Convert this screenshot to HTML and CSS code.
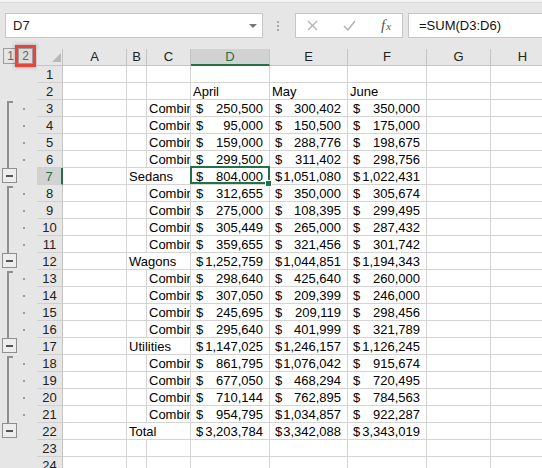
FILE: index.html
```html
<!DOCTYPE html>
<html lang="en">
<head>
    <meta charset="UTF-8">
    <meta name="viewport" content="width=device-width, initial-scale=1.0">
    <title>Sales by Category</title>
    <link rel="stylesheet" href="styles.css">
</head>
<body>
    <div class="formula-bar">
        <div class="name-box">
            <span>D7</span>
            <span class="name-arrow"></span>
        </div>
        <div class="grip"><i></i><i></i><i></i></div>
        <div class="fn-buttons">
            <svg class="fn-cancel" width="11" height="11" viewBox="0 0 11 11">
                <path d="M1 1 L10 10 M10 1 L1 10" stroke="#b3b3b3" stroke-width="1.4" fill="none"/>
            </svg>
            <svg class="fn-enter" width="13" height="11" viewBox="0 0 13 11">
                <path d="M1 6 L5 10 L12 1" stroke="#b3b3b3" stroke-width="1.5" fill="none"/>
            </svg>
            <span class="fx">f<span>x</span></span>
        </div>
        <div class="formula-input">=SUM(D3:D6)</div>
    </div>

    <div class="workspace">
        <div class="outline" id="outline">
            <div class="levels">
                <span class="level">1</span>
                <span class="level current">2</span>
            </div>
        </div>
        <div class="sheet" id="sheet"></div>
    </div>

    <script>
        const columns = ["A", "B", "C", "D", "E", "F", "G", "H"];

        // each group: four detail rows then the subtotal row
        const groups = [
            { label: "Sedans", items: [[250500, 300402, 350000], [95000, 150500, 175000], [159000, 288776, 198675], [299500, 311402, 298756]], total: [804000, 1051080, 1022431] },
            { label: "Wagons", items: [[312655, 350000, 305674], [275000, 108395, 299495], [305449, 265000, 287432], [359655, 321456, 301742]], total: [1252759, 1044851, 1194343] },
            { label: "Utilities", items: [[298640, 425640, 260000], [307050, 209399, 246000], [245695, 209119, 298456], [295640, 401999, 321789]], total: [1147025, 1246157, 1126245] },
            { label: "Total", items: [[861795, 1076042, 915674], [677050, 468294, 720495], [710144, 762895, 784563], [954795, 1034857, 922287]], total: [3203784, 3342088, 3343019] }
        ];

        const sheet = document.getElementById("sheet");
        const outline = document.getElementById("outline");

        function el(parent, cls, text) {
            const node = document.createElement("div");
            node.className = cls;
            if (text !== undefined) node.textContent = text;
            parent.appendChild(node);
            return node;
        }

        // build row list
        const rows = { 1: {}, 2: { D: "April", E: "May", F: "June" }, 23: {}, 24: {} };
        const outlineRows = { 1: "", 2: "" , 23: "", 24: "" };
        let r = 3;
        groups.forEach(g => {
            g.items.forEach((values, i) => {
                rows[r] = { C: "Combined", money: values };
                outlineRows[r] = i === 0 ? "first" : "detail";
                r++;
            });
            rows[r] = { B: g.label, money: g.total };
            outlineRows[r] = "total";
            r++;
        });

        // outline column
        for (let n = 1; n <= 24; n++) {
            const row = el(outline, "orow");
            const kind = outlineRows[n];
            if (kind === "first" || kind === "detail") {
                el(row, kind === "first" ? "bar first" : "bar");
                el(row, "dot");
            } else if (kind === "total") {
                el(row, "minus");
            }
        }

        // column headers
        const corner = el(sheet, "head corner");
        corner.innerHTML = '<svg width="9" height="9" viewBox="0 0 9 9"><polygon points="9,0 9,9 0,9" fill="#b8b8b8"/></svg>';
        columns.forEach(c => el(sheet, c === "D" ? "head col-head active" : "head col-head", c));

        // rows
        for (let n = 1; n <= 24; n++) {
            const row = rows[n];
            el(sheet, n === 7 ? "head row-head active" : "head row-head", n);
            el(sheet, "cell");
            if (row.B) {
                el(sheet, "cell text span2", row.B);
            } else {
                el(sheet, "cell");
                el(sheet, "cell text", row.C || "");
            }
            ["D", "E", "F"].forEach((c, i) => {
                let cell;
                if (row.money) {
                    cell = el(sheet, "cell money");
                    el(cell, "sign", "$");
                    el(cell, "amount", row.money[i].toLocaleString("en-US"));
                } else {
                    cell = el(sheet, "cell text", row[c] || "");
                }
                if (n === 7 && c === "D") cell.classList.add("selected");
            });
            el(sheet, "cell");
            el(sheet, "cell");
        }
    </script>
</body>
</html>
```

FILE: styles.css
```css
body {
    margin: 0;
    width: 542px;
    height: 468px;
    overflow: hidden;
    background-color: #e6e6e6;
    font-family: "Liberation Sans", Arial, sans-serif;
}

/* formula bar */
.formula-bar {
    display: flex;
    height: 49px;
    padding-top: 13px;
    box-sizing: border-box;
    background: linear-gradient(#f4f4f4 0 2px, #dadada 2px 3px, #e6e6e6 3px);
}
.name-box {
    margin-left: 5px;
    width: 258px;
    height: 25px;
    box-sizing: border-box;
    display: flex;
    align-items: center;
    justify-content: space-between;
    padding: 0 5px 0 7px;
    background-color: white;
    border: 1px solid #c6c6c6;
    font-size: 13px;
    color: #222;
}
.name-arrow {
    width: 0;
    height: 0;
    border-left: 4px solid transparent;
    border-right: 4px solid transparent;
    border-top: 4px solid #777;
}
.grip {
    margin-left: 14px;
    padding-top: 8px;
    display: flex;
    flex-direction: column;
    gap: 2px;
}
.grip i {
    width: 2px;
    height: 2px;
    background-color: #a8a8a8;
}
.fn-buttons {
    margin-left: 16px;
    width: 108px;
    height: 25px;
    box-sizing: border-box;
    display: flex;
    align-items: center;
    background-color: white;
    border: 1px solid #c6c6c6;
}
.fn-cancel {
    margin-left: 11px;
}
.fn-enter {
    margin-left: 25px;
}
.fx {
    margin-left: 25px;
    font-family: "Liberation Serif", "Times New Roman", serif;
    font-style: italic;
    font-size: 15px;
    color: #555;
    line-height: 1;
}
.fx span {
    font-size: 11px;
    margin-left: 1px;
}
.formula-input {
    margin-left: 5px;
    margin-right: -6px;
    flex: 1;
    height: 25px;
    box-sizing: border-box;
    padding-left: 10px;
    line-height: 23px;
    background-color: white;
    border: 1px solid #c6c6c6;
    font-size: 13px;
    color: #111;
}

/* sheet area */
.workspace {
    display: flex;
    align-items: flex-start;
}
.outline {
    width: 37px;
    flex-shrink: 0;
}
.levels {
    height: 17px;
    display: flex;
    padding-left: 3px;
}
.level {
    margin-top: -1px;
    width: 15px;
    height: 16px;
    box-sizing: border-box;
    border: 1px solid #9c9c9c;
    font-size: 12px;
    line-height: 14px;
    text-align: center;
    color: #666;
}
.level.current {
    background-color: #dcdcdc;
    outline: 3px solid #e8453d;
    box-shadow: 0 0 3px 4px rgba(0, 0, 0, 0.18);
}
.orow {
    height: 17px;
    display: flex;
}
.bar {
    margin-left: 7px;
    width: 6px;
    box-sizing: border-box;
    border-left: 2px solid #8f8f8f;
}
.bar.first {
    margin-top: 1px;
    border-top: 2px solid #8f8f8f;
}
.dot {
    margin: 8px 0 0 10px;
    width: 2px;
    height: 2px;
    background-color: #9c9c9c;
}
.minus {
    margin-left: 2px;
    width: 15px;
    height: 15px;
    box-sizing: border-box;
    border: 1px solid #8f8f8f;
    background-color: #ededed;
    display: flex;
    align-items: center;
    justify-content: center;
}
.minus::before {
    content: "";
    width: 7px;
    height: 2px;
    background-color: #555;
}

.sheet {
    display: grid;
    grid-template-columns: 26px 64px 20px 44px 79px 78px 79px 64px 64px;
    grid-auto-rows: 17px;
    flex-shrink: 0;
}
.head {
    box-sizing: border-box;
    background-color: #e6e6e6;
    border-right: 1px solid #c4c4c4;
    border-bottom: 1px solid #c4c4c4;
    font-size: 13px;
    line-height: 16px;
    text-align: center;
    color: #222;
}
.head.corner {
    display: flex;
    align-items: flex-end;
    justify-content: flex-end;
    padding: 0 1px 3px 0;
}
.row-head {
    padding-top: 1px;
    border-bottom-color: #d0d0d0;
}
.head.active {
    background-color: #d2d2d2;
    color: #217346;
}
.col-head.active {
    border-bottom: 2px solid #217346;
}
.row-head.active {
    border-right: 2px solid #217346;
}
.cell {
    box-sizing: border-box;
    background-color: white;
    border-right: 1px solid #d4d4d4;
    border-bottom: 1px solid #d4d4d4;
    padding-top: 1px;
    font-size: 13px;
    line-height: 16px;
    color: #000;
    white-space: nowrap;
    overflow: hidden;
}
.cell.text {
    padding-left: 2px;
}
.cell.span2 {
    grid-column: span 2;
}
.cell.money {
    display: flex;
    justify-content: space-between;
    padding-left: 5px;
    padding-right: 6px;
}

/* active cell */
.cell.selected {
    position: relative;
    overflow: visible;
    z-index: 1;
}
.cell.selected::after {
    content: "";
    position: absolute;
    left: -1px;
    top: -2px;
    right: -1px;
    bottom: 0;
    border: 2px solid #217346;
    z-index: 1;
}
.cell.selected::before {
    content: "";
    position: absolute;
    right: -3px;
    bottom: -3px;
    width: 5px;
    height: 5px;
    background-color: #217346;
    border: 1px solid white;
    z-index: 2;
}
```
